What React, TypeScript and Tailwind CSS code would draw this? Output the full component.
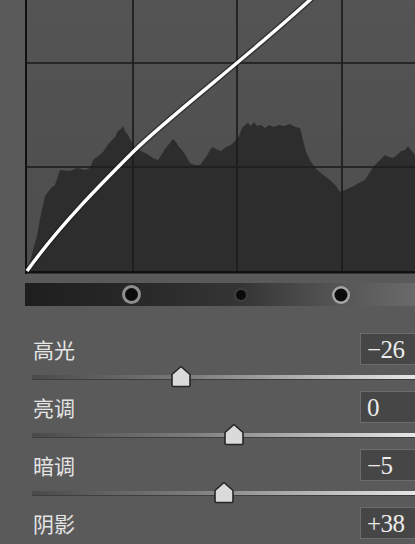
import React from "react";

const hist: [number, number][] = [
  [2, 272], [5, 262], [8, 250], [12, 236], [16, 214], [20, 196], [23, 192], [26, 188], [30, 185], [33, 176], [35, 170],
  [45, 171], [52, 168], [60, 170], [65, 168], [68, 160], [72, 157], [78, 152], [82, 146], [86, 141], [90, 137],
  [93, 131], [96, 129], [98, 126], [100, 131], [103, 135], [106, 141], [110, 148], [116, 151], [122, 154],
  [128, 158], [133, 160], [137, 154], [140, 149], [144, 144], [148, 139], [151, 142], [154, 147], [157, 150],
  [161, 156], [165, 163], [170, 165], [175, 165], [178, 161], [181, 157], [184, 152], [187, 147], [191, 149],
  [196, 151], [201, 147], [206, 145], [210, 141], [214, 136], [217, 128], [220, 125], [223, 123], [226, 126],
  [229, 122], [232, 126], [236, 125], [240, 128], [244, 125], [249, 127], [254, 125], [259, 126], [265, 124],
  [270, 127], [275, 128], [278, 140], [281, 152], [285, 160], [290, 168], [297, 174], [305, 180], [311, 186],
  [315, 192], [320, 190], [327, 187], [334, 183], [340, 180], [345, 172], [350, 165], [355, 160], [360, 155],
  [364, 157], [368, 158], [372, 155], [376, 151], [380, 150], [383, 146], [386, 150], [390, 155], [390, 272],
];

function Graph() {
  const d = "M " + hist.map(([x, y]) => `${x} ${y}`).join(" L ") + " Z";
  return (
    <svg width={390} height={275} viewBox="0 0 390 275" className="block">
      <defs>
        <linearGradient id="gbg" x1="0" y1="0" x2="0" y2="1">
          <stop offset="0" stopColor="#545454" />
          <stop offset="1" stopColor="#4d4d4d" />
        </linearGradient>
      </defs>
      <rect x={0} y={0} width={390} height={273} fill="url(#gbg)" />
      <path d={d} fill="#2d2d2d" />
      {[107, 211, 316].map((x) => (
        <rect key={x} x={x} y={0} width={2} height={273} fill="#1c1c1c" opacity={0.85} />
      ))}
      {[62, 166].map((y) => (
        <rect key={y} x={0} y={y} width={390} height={2} fill="#1e1e1e" opacity={0.85} />
      ))}
      <rect x={0} y={0} width={2} height={274} fill="#111" />
      <rect x={0} y={271} width={390} height={2.5} fill="#111" />
      <path
        d="M 2 271 C 35 225, 75 185, 108 152 S 225 55, 287 -2"
        fill="none"
        stroke="#1a1a1a"
        strokeOpacity={0.6}
        strokeWidth={6}
      />
      <path
        d="M 2 271 C 35 225, 75 185, 108 152 S 225 55, 287 -2"
        fill="none"
        stroke="#ffffff"
        strokeWidth={3.4}
      />
    </svg>
  );
}

function Knob({ left, ring, ringR, dotR }: { left: number; ring: string; ringR: number; dotR: number }) {
  const s = ringR * 2 + 2;
  return (
    <svg
      width={s}
      height={s}
      className="absolute"
      style={{ left: left - s / 2, top: 11.5 - s / 2 }}
    >
      <circle cx={s / 2} cy={s / 2} r={ringR} fill={ring} />
      <circle cx={s / 2} cy={s / 2} r={dotR} fill="#0b0b0b" />
    </svg>
  );
}

function Thumb({ x }: { x: number }) {
  return (
    <svg width={24} height={23} className="absolute" style={{ left: x - 12, top: -10 }}>
      <path
        d="M 12 1.5 L 21 9.5 L 21 20 Q 21 21.5 19.5 21.5 L 4.5 21.5 Q 3 21.5 3 20 L 3 9.5 Z"
        fill="#dadada"
        stroke="#262626"
        strokeWidth={1.6}
        strokeLinejoin="round"
      />
    </svg>
  );
}

function Row({ label, value, thumb }: { label: string; value: string; thumb?: number }) {
  return (
    <div className="flex flex-col">
      <div className="flex h-[32px] items-center">
        <div
          className="ml-[33px] text-[21px] leading-none text-[#e4e4e4]"
          style={{ fontFamily: '"Noto Sans CJK SC", sans-serif' }}
        >
          {label}
        </div>
        <div
          className="ml-auto h-[32px] w-[70px] -mr-[15px] border border-[#6c6c6c] bg-[#464646] pl-[6px] flex items-center text-[25px] leading-none text-[#ececec] tracking-[-0.5px]"
          style={{ fontFamily: '"Liberation Serif", serif' }}
        >
          {value}
        </div>
      </div>
      {thumb !== undefined && (
        <div className="h-[26px] pt-[10px]">
          <div className="relative ml-[32px] h-[4px] bg-[linear-gradient(to_right,#4a4a4a,#7a7a7a_40%,#a8a8a8_65%,#e6e6e6)] shadow-[0_1px_0_#3e3e3e]">
            <Thumb x={thumb - 32} />
          </div>
        </div>
      )}
    </div>
  );
}

export default function App() {
  return (
    <div className="w-[415px] h-[544px] overflow-hidden bg-[#5a5a5a]">
      <div className="ml-[25px]">
        <Graph />
      </div>
      <div className="relative ml-[25px] mt-[8px] h-[23px] bg-[linear-gradient(to_right,#1e1e1e,#282828_28%,#353535_55%,#555555_80%,#6a6a6a)]">
        <Knob left={106} ring="#8e8e8e" ringR={9.5} dotR={6.5} />
        <Knob left={216} ring="#3e3e3e" ringR={7} dotR={5} />
        <Knob left={316} ring="#a5a5a5" ringR={9} dotR={6.5} />
      </div>
      <div className="mt-[27px] flex flex-col">
        <Row label="高光" value="−26" thumb={181} />
        <Row label="亮调" value="0" thumb={234} />
        <Row label="暗调" value="−5" thumb={224} />
        <Row label="阴影" value="+38" />
      </div>
    </div>
  );
}
